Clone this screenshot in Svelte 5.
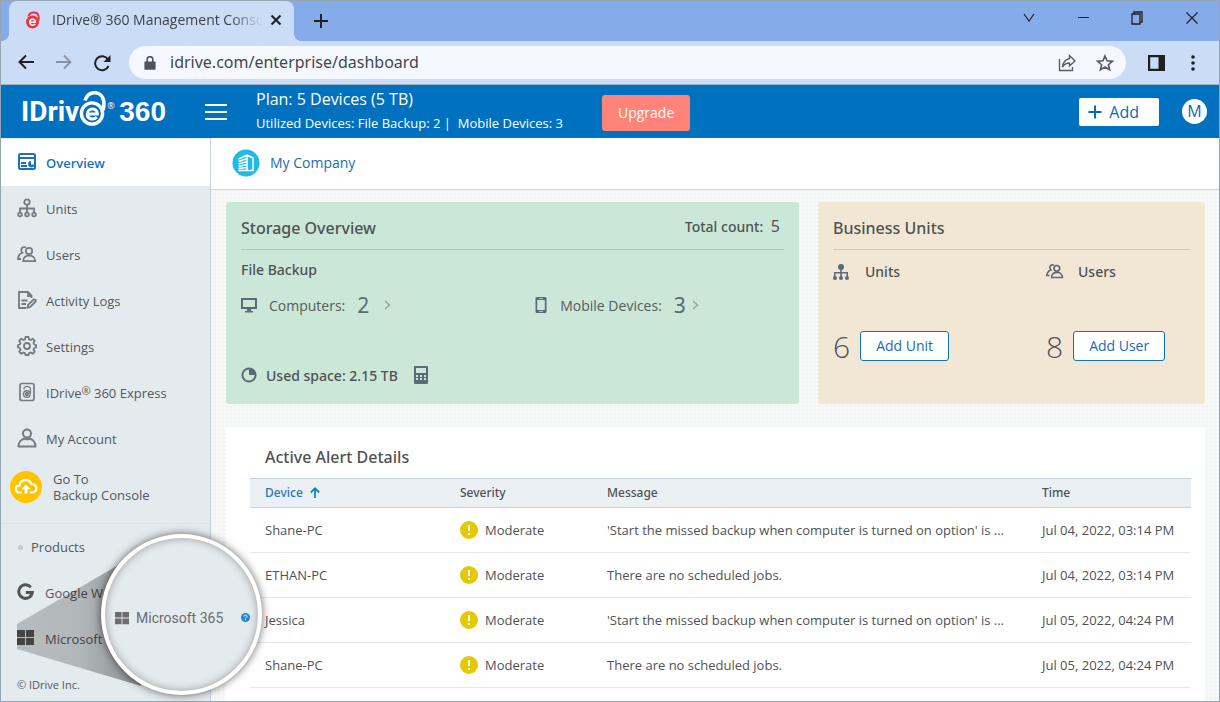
<script lang="ts">
  interface Alert {
    device: string;
    severity: string;
    message: string;
    time: string;
  }

  interface NavItem {
    label: string;
    icon: string;
    reg?: string;
    active?: boolean;
  }

  const missed = "'Start the missed backup when computer is turned on option' is ...";
  const noJobs = "There are no scheduled jobs.";

  const alerts: Alert[] = [
    { device: "Shane-PC", severity: "Moderate", message: missed, time: "Jul 04, 2022, 03:14 PM" },
    { device: "ETHAN-PC", severity: "Moderate", message: noJobs, time: "Jul 04, 2022, 03:14 PM" },
    { device: "Jessica", severity: "Moderate", message: missed, time: "Jul 05, 2022, 04:24 PM" },
    { device: "Shane-PC", severity: "Moderate", message: noJobs, time: "Jul 05, 2022, 04:24 PM" },
  ];

  const nav: NavItem[] = [
    { label: "Overview", icon: "overview", active: true },
    { label: "Units", icon: "units" },
    { label: "Users", icon: "users" },
    { label: "Activity Logs", icon: "logs" },
    { label: "Settings", icon: "gear" },
    { label: "IDrive", reg: " 360 Express", icon: "express" },
    { label: "My Account", icon: "account" },
  ];

  let address = $state("idrive.com/enterprise/dashboard");
</script>

{#snippet usersIcon()}
  <svg width="20" height="17" viewBox="0 0 20 17" fill="none" stroke="currentColor" stroke-width="1.8">
    <circle cx="12" cy="5" r="3.2" />
    <path d="M6.300 15.200c-.6-7.600 12-7.600 12 0zM9 1.500C6.500.2 4 2 4.300 4.500c.1 1 .5 1.700 1 2.200C2.500 7.800 1 10.200 1 13h3" />
  </svg>
{/snippet}

{#snippet windowsIcon(size: number)}
  <svg width={size} height={size} viewBox="0 0 16 16" fill="currentColor">
    <path d="M0 1h7.500v6.500H0zM8.500 1H16v6.500H8.500zM0 8.500h7.500V15H0zM8.500 8.500H16V15H8.500z" />
  </svg>
{/snippet}

{#snippet navIcon(name: string)}
  {#if name === "overview"}
    <svg width="20" height="20" viewBox="0 0 20 20" fill="none" stroke="currentColor" stroke-width="2">
      <rect x="2" y="2" width="16" height="15" rx="1.500" />
      <path d="M2 6h16M4 11h5M4 14h6" />
      <path d="M14 9v3.500h3.500a3.200 3.200 0 1 1-3.500-3.500z" fill="currentColor" stroke="none" />
    </svg>
  {:else if name === "units"}
    <svg width="20" height="20" viewBox="0 0 20 20" fill="none" stroke="currentColor" stroke-width="1.800">
      <circle cx="10" cy="4" r="2.700" />
      <circle cx="3" cy="16.500" r="1.800" />
      <circle cx="10" cy="16.500" r="1.800" />
      <circle cx="17" cy="16.500" r="1.800" />
      <path d="M10 7v7.500M3 14.500v-4h14v4" />
    </svg>
  {:else if name === "users"}
    {@render usersIcon()}
  {:else if name === "logs"}
    <svg width="20" height="20" viewBox="0 0 20 20" fill="none" stroke="currentColor" stroke-width="1.800">
      <path d="M14.500 8V5.500L11 2H2v16h7M11 2v4h3.500M4.500 10.500h6M4.500 14h4.500" />
      <path d="M10.500 17.800l.6-3 5.600-5.300c1.300-.6 2.600.8 2 2l-5.500 5.500z" />
    </svg>
  {:else if name === "gear"}
    <svg width="20" height="20" viewBox="0 0 20 20" fill="none" stroke="currentColor" stroke-width="1.800">
      <circle cx="10" cy="10" r="3" />
      <path d="M8.500 1h3l.5 2.300 1.700.7 2-1.300 2.100 2.100-1.300 2 .7 1.700 2 .5v2.500l-2 .5-.7 1.700 1.300 2-2.100 2.100-2-1.300-1.700.7-.5 1.800h-3L8 17.200l-1.700-.7-2 1.300-2.100-2.100 1.300-2-.7-1.700L1 11.500V9l1.800-.5.7-1.700-1.300-2 2.100-2.100 2 1.300L8 3.300z" stroke-linejoin="round" />
    </svg>
  {:else if name === "express"}
    <svg width="20" height="20" viewBox="0 0 20 20" fill="none" stroke="currentColor" stroke-width="1.700">
      <rect x="3" y="1.500" width="14" height="17" rx="2" />
      <circle cx="9.800" cy="12" r="3.300" stroke-width="1.400" />
      <path d="M7 7.500C6.500 3.300 13.500 3.300 13.500 8v3.500M8.200 12h3.200c0-2-3-2-3 0s2 1.800 2.800 1" stroke-width="1.300" />
    </svg>
  {:else}
    <svg width="20" height="20" viewBox="0 0 20 20" fill="none" stroke="currentColor" stroke-width="2">
      <circle cx="10" cy="5.500" r="4" />
      <path d="M1.500 18.500c0-5 2.500-6.500 5.500-8 2 1 4 1 6 0 3 1.500 5.500 3 5.500 8z" stroke-linejoin="round" />
    </svg>
  {/if}
{/snippet}

<div class="window">
  <div class="tabstrip">
    <div class="tab">
      <svg width="16" height="18" viewBox="0 0 16 18" fill="none">
        <path d="M3.500 5.500C4 1 12.500-.5 13.500 5c.3 1.500.2 3 0 4.500" stroke="#e9353b" stroke-width="2" />
        <circle cx="7.500" cy="11" r="6.500" fill="#e9353b" />
        <path d="M4.800 11.300h5.600c0-4-5.600-4-5.600 0 0 3.300 3.800 3.500 5.400 1.800" stroke="#fff" stroke-width="1.500" />
      </svg>
      <span class="tab-title">IDrive® 360 Management Conso</span>
      <button class="plain" aria-label="Close tab">
        <svg width="12" height="12" viewBox="0 0 12 12" stroke="currentColor" stroke-width="2"><path d="M1.500 1.500l9 9M10.500 1.500l-9 9" /></svg>
      </button>
    </div>
    <button class="plain new-tab" aria-label="New tab">
      <svg width="16" height="16" viewBox="0 0 16 16" stroke="currentColor" stroke-width="2"><path d="M8 1v14M1 8h14" /></svg>
    </button>
    <div class="win-controls">
      <button class="plain" aria-label="Search tabs">
        <svg width="12" height="12" viewBox="0 0 12 12" fill="none" stroke="currentColor" stroke-width="1.200"><path d="M1 2l5 7 5-7" /></svg>
      </button>
      <button class="plain" aria-label="Minimize">
        <svg width="12" height="12" viewBox="0 0 12 12" stroke="currentColor"><path d="M1 5.500h11" /></svg>
      </button>
      <button class="plain" aria-label="Restore">
        <svg width="12" height="14" viewBox="0 0 12 14" fill="none" stroke="currentColor" stroke-width="1.300"><path d="M1 3h8v10H1zM3 3V1h8v10H9" /></svg>
      </button>
      <button class="plain" aria-label="Close">
        <svg width="14" height="14" viewBox="0 0 14 14" stroke="currentColor" stroke-width="1.200"><path d="M1.500 1.500l11 11M12.500 1.500l-11 11" /></svg>
      </button>
    </div>
  </div>

  <div class="toolbar">
    <div class="nav-buttons">
      <button class="plain" aria-label="Back">
        <svg width="18" height="16" viewBox="0 0 18 16" fill="none" stroke="currentColor" stroke-width="2"><path d="M17 8H2.500M9 1.500L2.500 8 9 14.500" /></svg>
      </button>
      <button class="plain dim" aria-label="Forward">
        <svg width="18" height="16" viewBox="0 0 18 16" fill="none" stroke="currentColor" stroke-width="1.800"><path d="M1 8h14.500M9 1.500L15.500 8 9 14.500" /></svg>
      </button>
      <button class="plain" aria-label="Reload">
        <svg width="18" height="18" viewBox="0 0 18 18" fill="none" stroke="currentColor" stroke-width="2"><path d="M15 5.500A7 7 0 1 0 15.500 12" /><path d="M17.500 1v7h-7z" fill="currentColor" stroke="none" /></svg>
      </button>
    </div>
    <div class="omnibox">
      <svg width="12" height="14" viewBox="0 0 12 14" fill="#50545a"><path d="M1 5.500h10q.6 0 .6.600v7q0 .6-.6.600H1q-.6 0-.6-.6v-7q0-.6.600-.6z" /><path d="M3.200 6V3.500a2.800 2.800 0 0 1 5.600 0V6" fill="none" stroke="#50545a" stroke-width="1.600" /></svg>
      <input type="text" aria-label="Address" bind:value={address} />
      <button class="plain grey" aria-label="Share">
        <svg width="18" height="18" viewBox="0 0 18 18" fill="none" stroke="currentColor" stroke-width="1.400"><path d="M1.500 5v11.500h13V13" /><path d="M11.500 1.500L17 7l-5.500 5V9C8.500 9 6.500 10 4.500 13c.5-5 3-7.500 7-8.500z" /></svg>
      </button>
      <button class="plain grey" aria-label="Bookmark this page">
        <svg width="18" height="18" viewBox="0 0 18 18" fill="none" stroke="currentColor" stroke-width="1.700"><path d="M9 2l2.100 4.800 5.200.5-3.900 3.400 1.200 5.100L9 13.100l-4.600 2.700 1.200-5.100-3.900-3.400 5.200-.5z" /></svg>
      </button>
    </div>
    <button class="plain" aria-label="Side panel">
      <svg width="18" height="18" viewBox="0 0 18 18"><path d="M0 1h17v16H0zM2.200 3.200v11.600H10.500V3.200z" fill="currentColor" fill-rule="evenodd" /></svg>
    </button>
    <button class="plain menu" aria-label="Browser menu">
      <svg width="4" height="18" viewBox="0 0 4 18" fill="currentColor"><circle cx="2" cy="3" r="1.800" /><circle cx="2" cy="9" r="1.800" /><circle cx="2" cy="15" r="1.800" /></svg>
    </button>
  </div>

  <header class="topbar">
    <a class="logo" href="#home" aria-label="IDrive 360">
      <span class="logo-name">IDriv</span>
      <svg width="27" height="36" viewBox="0 0 27 36" fill="none" stroke="currentColor">
        <path d="M6 9.500C9-.5 22-1 24.500 9c.8 3.500.6 6-.5 10" stroke-width="3.600" />
        <circle cx="13" cy="22.500" r="10.600" stroke-width="3.400" />
        <path d="M8.200 23h10.200c0-7-10-6.500-10.200.3.200 5.500 6.800 6 9.600 2.700" stroke-width="3" />
      </svg>
      <sup>®</sup>
      <span class="logo-num">360</span>
    </a>
    <button class="plain burger" aria-label="Toggle menu">
      <svg width="22" height="18" viewBox="0 0 22 18" stroke="currentColor" stroke-width="2"><path d="M0 2h22M0 9h22M0 16h22" /></svg>
    </button>
    <div class="plan">
      <div class="plan-name">Plan: 5 Devices (5 TB)</div>
      <div class="plan-use">Utilized Devices: File Backup: 2 |&nbsp; Mobile Devices: 3</div>
    </div>
    <button class="upgrade">Upgrade</button>
    <button class="add">
      <svg width="14" height="14" viewBox="0 0 14 14" stroke="currentColor" stroke-width="2"><path d="M7 .500v13M.500 7h13" /></svg>
      Add
    </button>
    <button class="avatar">M</button>
  </header>

  <div class="body">
    <aside class="sidebar">
      <nav>
        {#each nav as item}
          <a class="nav-item" class:active={item.active} href="#{item.icon}">
            {@render navIcon(item.icon)}
            <span>{item.label}{#if item.reg}<sup>®</sup>{item.reg}{/if}</span>
          </a>
        {/each}
      </nav>
      <a class="goto" href="#console">
        <svg width="32" height="32" viewBox="0 0 32 32">
          <circle cx="16" cy="16" r="16" fill="#ffc400" />
          <path d="M12 21.500H9.800c-5 0-5.300-6.800-.3-7.200.8-6.500 10.200-7 11.800-1.300 6.700-.3 6.700 8.500.7 8.500h-2" fill="none" stroke="#fff" stroke-width="2.200" />
          <path d="M16 13.500l4.500 4.700h-3v4.300h-3v-4.300h-3z" fill="#fff" />
        </svg>
        <span>Go To<br />Backup Console</span>
      </a>
      <div class="products">Products</div>
      <a class="product" href="#google">
        <svg width="17" height="18" viewBox="0 0 17 18" fill="none" stroke="currentColor" stroke-width="3"><path d="M13.800 4.200A6.800 6.800 0 1 0 15.300 9.500H8.800" /></svg>
        <span>Google Workspace</span>
      </a>
      <a class="product" href="#microsoft">
        {@render windowsIcon(17)}
        <span>Microsoft 365</span>
      </a>
      <div class="copyright">© IDrive Inc.</div>

      <!-- Lens over the Microsoft 365 entry -->
      <svg class="cone" width="140" height="124" viewBox="0 0 140 124">
        <defs>
          <linearGradient id="coneFill" x1="0" x2="1">
            <stop offset="0" stop-color="#000" stop-opacity=".2" />
            <stop offset=".5" stop-color="#000" stop-opacity=".22" />
            <stop offset="1" stop-color="#000" stop-opacity=".4" />
          </linearGradient>
        </defs>
        <path d="M0 62L110-2l14 126L0 87z" fill="url(#coneFill)" />
      </svg>
      <div class="lens">
        {@render windowsIcon(14)}
        <span>Microsoft 365</span>
        <svg width="9" height="9" viewBox="0 0 9 9"><circle cx="4.500" cy="4.500" r="4.500" fill="#2b83cf" /><path d="M3 3.500c0-2 3-2 3 0 0 1-1.500 1-1.500 2M4.500 6.200v1" fill="none" stroke="#fff" /></svg>
      </div>
    </aside>

    <main>
      <div class="company">
        <svg width="28" height="28" viewBox="0 0 28 28" fill="none" stroke="#fff" stroke-width="1.500">
          <circle cx="14" cy="14" r="13.500" fill="#1dbbe6" stroke="none" />
          <path d="M15 6v15.500h6V9L15 6 6.500 10M15 9.500L6.500 12.500M15 12.500l-8.500 2.500M15 15.500L6.500 17.500M15 18.500l-8.500 1M6.500 21.500H15" />
        </svg>
        <a href="#company">My Company</a>
      </div>

      <div class="content">
        <div class="cards">
          <section class="card storage">
            <div class="card-head">
              <h2>Storage Overview</h2>
              <div class="total">Total count: <span>5</span></div>
            </div>
            <h3>File Backup</h3>
            <div class="devices">
              <div class="stat">
                <svg width="16" height="16" viewBox="0 0 16 16" fill="currentColor"><path d="M0 1h16v11H0zM2 3v7h12V3z" fill-rule="evenodd" /><path d="M6 12h4v2h2v1.500H4V14h2z" /></svg>
                <span class="label">Computers:</span>
                <span class="count">2</span>
                <svg class="chev" width="7" height="10" viewBox="0 0 7 10"><path d="M1 1l4.500 4L1 9" /></svg>
              </div>
              <div class="stat mobile">
                <svg width="14" height="16" viewBox="-1 0 14 16" fill="currentColor"><path d="M2 0h8q1.500 0 1.500 1.500v13q0 1.500-1.500 1.500H2Q.500 16 .500 14.500v-13Q.500 0 2 0zM2.200 3v10h7.600V3zM4 1v.8h4V1zM4 14.200v.8h4v-.8z" fill-rule="evenodd" /></svg>
                <span class="label">Mobile Devices:</span>
                <span class="count">3</span>
                <svg class="chev" width="7" height="10" viewBox="0 0 7 10"><path d="M1 1l4.500 4L1 9" /></svg>
              </div>
            </div>
            <div class="used">
              <svg width="16" height="16" viewBox="0 0 16 16"><circle cx="8" cy="8" r="6.600" fill="none" stroke="currentColor" stroke-width="2" /><path d="M8 1v7h7A7 7 0 0 0 8 1z" fill="currentColor" /></svg>
              <span>Used space: 2.15 TB</span>
              <svg width="14" height="18" viewBox="0 0 14 18"><rect width="14" height="18" rx="1" fill="currentColor" /><path d="M2 2h10v5H2zM2 9h2v2H2zM6 9h2v2H6zM10 9h2v2h-2zM2 12h2v2H2zM6 12h2v2H6zM10 12h2v2h-2z" fill="#cbe7d8" /></svg>
            </div>
          </section>

          <section class="card business">
            <div class="card-head"><h2>Business Units</h2></div>
            <div class="pair">
              <div class="who">
                <svg width="18" height="16" viewBox="0 0 18 16" fill="currentColor"><circle cx="8" cy="3" r="3" /><path d="M7.200 5h1.600v3H15v5h-1.500V9.500H8.800V13H7.200V9.500H2.500V13H1V8h6.200z" /><circle cx="2" cy="14" r="2" /><circle cx="8" cy="14" r="2" /><circle cx="14" cy="14" r="2" /></svg>
                <span>Units</span>
              </div>
              <div class="who">
                {@render usersIcon()}
                <span>Users</span>
              </div>
            </div>
            <div class="pair counts">
              <div class="tally"><span>6</span><button>Add Unit</button></div>
              <div class="tally"><span>8</span><button>Add User</button></div>
            </div>
          </section>
        </div>

        <section class="alerts">
          <h2>Active Alert Details</h2>
          <table>
            <colgroup><col class="c-device" /><col class="c-severity" /><col /><col class="c-time" /></colgroup>
            <thead>
              <tr>
                <th class="sorted">
                  Device
                  <svg width="10" height="11" viewBox="0 0 10 11" fill="none" stroke="#1585b8" stroke-width="1.800"><path d="M5 11V1.500M.800 5.500L5 1.300l4.200 4.200" /></svg>
                </th>
                <th>Severity</th>
                <th>Message</th>
                <th>Time</th>
              </tr>
            </thead>
            <tbody>
              {#each alerts as alert}
                <tr>
                  <td>{alert.device}</td>
                  <td>
                    <div class="severity">
                      <svg width="18" height="18" viewBox="0 0 18 18"><circle cx="9" cy="9" r="9" fill="#e4c900" /><path d="M9 4v6M9 12v2" stroke="#fff" stroke-width="2" /></svg>
                      {alert.severity}
                    </div>
                  </td>
                  <td>{alert.message}</td>
                  <td>{alert.time}</td>
                </tr>
              {/each}
            </tbody>
          </table>
        </section>
      </div>
    </main>
  </div>
</div>

<style>
  :global(body) {
    margin: 0;
  }

  .window {
    box-sizing: border-box;
    min-height: 100vh;
    display: flex;
    flex-direction: column;
    border: 1px solid #93a7b3;
    font-family: "Open Sans", "Noto Sans", sans-serif;
    font-size: 13px;
    color: #4f5254;
    background: #fff;
  }

  a {
    color: inherit;
    text-decoration: none;
  }

  button {
    font-family: inherit;
    cursor: pointer;
  }

  svg {
    flex: none;
    display: block;
  }

  .plain {
    display: flex;
    padding: 0;
    border: 0;
    background: none;
    color: #1f2023;
  }

  .plain.dim {
    color: #8a93a5;
  }

  .plain.grey {
    color: #5a5d61;
  }

  /* Browser chrome */

  .tabstrip {
    display: flex;
    align-items: center;
    height: 40px;
    padding-left: 8px;
    background: #85abe9;
  }

  .tab {
    position: relative;
    box-sizing: border-box;
    display: flex;
    align-items: center;
    align-self: stretch;
    width: 285px;
    padding: 0 12px 2px 16px;
    border-radius: 8px 8px 0 0;
    background: #cbdcf6;
  }

  .tab::before,
  .tab::after {
    content: "";
    position: absolute;
    bottom: 0;
    width: 8px;
    height: 8px;
  }

  .tab::before {
    right: 100%;
    background: radial-gradient(circle at 0 0, transparent 8px, #cbdcf6 8px);
  }

  .tab::after {
    left: 100%;
    background: radial-gradient(circle at 100% 0, transparent 8px, #cbdcf6 8px);
  }

  .tab-title {
    flex: 1;
    min-width: 0;
    margin: 0 8px 0 11px;
    padding-bottom: 2px;
    white-space: nowrap;
    font-size: 14px;
    color: #3e434b;
    mask-image: linear-gradient(to right, #000 85%, transparent);
  }

  .new-tab {
    margin-left: 19px;
  }

  .win-controls {
    display: flex;
    align-items: center;
    gap: 42px;
    margin-left: auto;
    padding: 0 20px 6px 0;
  }

  .toolbar {
    display: flex;
    align-items: center;
    height: 43px;
    padding: 0 24px 0 16px;
    border-bottom: 1px solid #9fb3c3;
    background: #cbdcf6;
  }

  .nav-buttons {
    display: flex;
    gap: 20px;
    padding-right: 18px;
  }

  .omnibox {
    flex: 1;
    display: flex;
    align-items: center;
    gap: 20px;
    height: 33px;
    margin-right: 22px;
    padding: 0 12px 0 15px;
    border-radius: 17px;
    background: #f5f8fe;
  }

  .omnibox input {
    flex: 1;
    min-width: 0;
    margin-left: -6px;
    padding: 0 0 2px;
    border: 0;
    outline: 0;
    background: none;
    font-family: "Noto Sans", sans-serif;
    font-size: 16px;
    color: #44474c;
  }

  .menu {
    margin-left: 25px;
  }

  /* Application header */

  .topbar {
    display: flex;
    align-items: center;
    height: 53px;
    padding: 0 12px 0 20px;
    background: #0071be;
    color: #fff;
  }

  .logo {
    display: flex;
    align-items: center;
    width: 150px;
    line-height: 36px;
  }

  .logo svg {
    margin-bottom: 6px;
  }

  .logo-name {
    font-family: Roboto, sans-serif;
    font-size: 28px;
    font-weight: 700;
  }

  .logo sup {
    align-self: flex-start;
    width: 12px;
    padding-left: 1px;
    font-size: 9px;
    line-height: 30px;
  }

  .logo-num {
    font-family: "Liberation Sans", Arial, sans-serif;
    font-size: 28px;
    font-weight: 700;
  }

  .burger {
    margin: 0 29px 0 34px;
    color: #fff;
  }

  .plan {
    width: 346px;
    padding-bottom: 2px;
    white-space: nowrap;
  }

  .plan-name {
    font-size: 16px;
    line-height: 24px;
  }

  .plan-use {
    font-size: 13px;
    line-height: 24px;
  }

  .upgrade {
    height: 36px;
    margin-top: 2px;
    padding: 0 16px;
    border: 0;
    border-radius: 3px;
    background: #ff8378;
    color: #fff;
    font-size: 14px;
  }

  .add {
    display: flex;
    align-items: center;
    gap: 7px;
    height: 28px;
    margin-left: auto;
    padding: 0 20px 0 9px;
    border: 0;
    border-radius: 2px;
    background: #fff;
    color: #0a6ab4;
    font-size: 16px;
  }

  .avatar {
    width: 25px;
    height: 25px;
    margin-left: 23px;
    padding: 0;
    border: 0;
    border-radius: 50%;
    background: #fff;
    color: #0a6ab4;
    font-size: 16px;
    line-height: 25px;
  }

  .body {
    flex: 1;
    display: flex;
  }

  /* Sidebar */

  .sidebar {
    position: relative;
    box-sizing: border-box;
    width: 210px;
    border-right: 1px solid #c3d5e2;
    background: #e4ebee;
    color: #53585c;
  }

  .nav-item {
    display: flex;
    align-items: center;
    gap: 9px;
    height: 46px;
    padding-left: 16px;
  }

  .nav-item svg {
    margin-bottom: 2px;
    color: #747b82;
  }

  .nav-item.active {
    height: 47px;
    margin-top: 1px;
    background: #fff;
    color: #1a72bd;
    font-weight: 600;
  }

  .nav-item.active svg {
    color: #1a72bd;
  }

  .nav-item sup {
    font-size: 11px;
    line-height: 1px;
    vertical-align: 3px;
  }

  .goto {
    display: flex;
    align-items: center;
    gap: 11px;
    height: 49px;
    padding: 0 0 12px 9px;
    border-bottom: 1px solid #dce4e8;
    line-height: 16px;
  }

  .products {
    display: flex;
    align-items: center;
    gap: 8px;
    height: 46px;
    padding-left: 17px;
  }

  .products::before {
    content: "";
    width: 5px;
    height: 5px;
    border-radius: 50%;
    background: #c4c9cc;
  }

  .product {
    display: flex;
    align-items: center;
    gap: 11px;
    height: 46px;
    padding-left: 16px;
  }

  .product svg {
    margin-bottom: 3px;
    color: #555;
  }

  .copyright {
    padding: 8px 0 0 16px;
    font-size: 11px;
    line-height: 30px;
  }

  .cone {
    position: absolute;
    left: 16px;
    bottom: 15px;
  }

  .lens {
    position: absolute;
    z-index: 2;
    left: 100px;
    bottom: 6px;
    box-sizing: border-box;
    display: flex;
    align-items: center;
    gap: 7px;
    width: 161px;
    height: 161px;
    padding: 6px 0 0 10px;
    border: 4px solid #fff;
    border-radius: 50%;
    background: #e4ebee;
    box-shadow: 0 0 9px rgba(0, 0, 0, 0.6), inset 0 0 9px rgba(0, 0, 0, 0.35);
    color: #6a6c6e;
    font-family: Roboto, sans-serif;
    font-size: 14px;
    white-space: nowrap;
  }

  .lens span {
    width: 98px;
  }

  /* Main area */

  main {
    flex: 1;
    min-width: 0;
    display: flex;
    flex-direction: column;
    background: radial-gradient(circle, #fff 0.5px, transparent 1px) 0 0 / 4px 4px #f3f6f5;
  }

  .company {
    display: flex;
    align-items: center;
    gap: 10px;
    height: 49px;
    padding: 0 0 2px 21px;
    border-bottom: 1px solid #c6d6e3;
    background: #fff;
    color: #1a6bb5;
    font-size: 14px;
  }

  .content {
    flex: 1;
    display: flex;
    flex-direction: column;
    gap: 23px;
    padding: 12px 14px 0 15px;
  }

  .cards {
    display: grid;
    grid-template-columns: 573fr 387fr;
    gap: 19px;
  }

  .card {
    box-sizing: border-box;
    padding: 0 15px 14px;
    border-radius: 3px;
  }

  .storage {
    background: #cbe7d8;
  }

  .business {
    background: #f2e7d5;
  }

  .card-head {
    box-sizing: border-box;
    display: flex;
    align-items: center;
    justify-content: space-between;
    height: 48px;
    padding-top: 4px;
    border-bottom: 1px solid #a9c7bb;
  }

  .business .card-head {
    border-color: #cfc7b9;
  }

  h2,
  h3,
  .total,
  .used,
  .who {
    margin: 0;
    font-family: "Noto Sans", sans-serif;
    font-weight: 500;
  }

  h2 {
    font-size: 16px;
    line-height: 24px;
  }

  .total {
    padding: 0 4px 4px 0;
    font-size: 14px;
  }

  .total span {
    margin-left: 4px;
    font-size: 16px;
    font-weight: 400;
  }

  h3 {
    font-size: 14px;
    line-height: 40px;
  }

  .devices {
    display: grid;
    grid-template-columns: 54% 46%;
    height: 30px;
  }

  .stat {
    display: flex;
    align-items: center;
    gap: 12px;
    font-size: 14px;
    color: #566c77;
  }

  .stat .label {
    color: #575b5d;
  }

  .stat .count {
    font-family: "Noto Sans", sans-serif;
    font-size: 21px;
  }

  .stat .chev {
    margin-left: 3px;
  }

  .stat.mobile .chev {
    margin-left: -6px;
  }

  .chev {
    fill: none;
    stroke: #9a9c9e;
    stroke-width: 1.3;
  }

  .used {
    display: flex;
    align-items: center;
    gap: 9px;
    height: 30px;
    margin-top: 40px;
    font-size: 14px;
  }

  .used svg {
    color: #566c77;
  }

  .used span {
    margin-right: 7px;
  }

  .pair {
    display: grid;
    grid-template-columns: 213fr 144fr;
  }

  .who {
    display: flex;
    align-items: center;
    height: 43px;
    font-size: 14px;
  }

  .who svg {
    width: 18px;
    color: #566c77;
  }

  .who span {
    margin-left: 14px;
  }

  .counts {
    margin-top: 38px;
  }

  .tally {
    display: flex;
    align-items: center;
    gap: 10px;
    height: 30px;
  }

  .tally span {
    font-size: 30px;
    font-weight: 300;
  }

  .tally button {
    height: 30px;
    padding: 0 15px 2px;
    border: 1px solid #0a74bd;
    border-radius: 3px;
    background: #fff;
    color: #1a6bb5;
    font-size: 14px;
  }

  .alerts {
    flex: 1;
    padding: 18px 14px 0 24px;
    background: #fff;
  }

  .alerts h2 {
    padding: 0 0 9px 15px;
  }

  table {
    width: 100%;
    table-layout: fixed;
    border-collapse: separate;
    border-spacing: 0;
  }

  .c-device {
    width: 210px;
  }

  .c-severity {
    width: 147px;
  }

  .c-time {
    width: 149px;
  }

  th,
  td {
    box-sizing: border-box;
    padding: 0;
    text-align: left;
    white-space: nowrap;
  }

  th {
    height: 30px;
    padding-bottom: 2px;
    border: solid #c3d5e2;
    border-width: 1px 0;
    background: #ebf0f5;
    font-family: "Noto Sans", sans-serif;
    font-size: 12px;
    font-weight: 500;
  }

  td {
    height: 45px;
    border-bottom: 1px solid #e6e8e9;
    font-size: 13px;
  }

  th:first-child,
  td:first-child {
    padding-left: 15px;
  }

  .sorted {
    color: #2a77bc;
  }

  .sorted svg {
    display: inline-block;
    margin-left: 4px;
    vertical-align: -1px;
  }

  .severity {
    display: flex;
    align-items: center;
    gap: 7px;
  }
</style>
